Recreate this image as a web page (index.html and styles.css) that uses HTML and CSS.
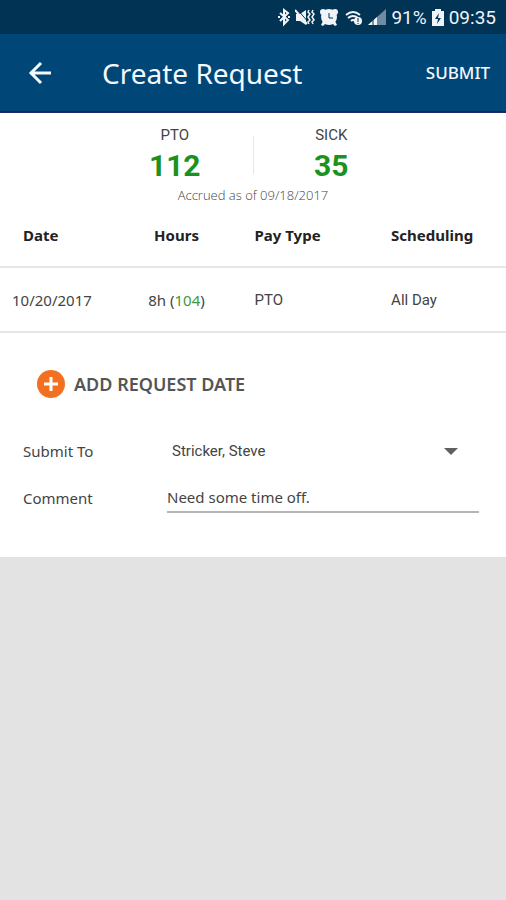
FILE: index.html
```html
<!DOCTYPE html>
<html lang="en">
<head>
<meta charset="utf-8">
<meta name="viewport" content="width=device-width, initial-scale=1">
<title>Create Request</title>
<link rel="stylesheet" href="styles.css">
</head>
<body>
<div class="status">
  <svg width="12" height="20" viewBox="0 0 12 20" fill="none" stroke="currentColor" stroke-width="2" aria-hidden="true"><path d="M2 5l8 7-4 4V2l4 3-8 8"/><path d="M0 9h2M10 9h2"/></svg>
  <svg width="20" height="20" viewBox="0 0 20 20" aria-hidden="true"><path fill="currentColor" d="M1 6h4l6-4v15l-6-4H1z"/><path class="cut" d="M2 1l12 14"/><path fill="none" stroke="currentColor" stroke-width="2" d="M0 2l12 14"/><path fill="none" stroke="currentColor" stroke-width="1.500" d="M14 2l-1 2 2 2-2 3 2 3-2 2 1 2M18 2l-1 2 2 2-2 3 2 3-2 2 1 2"/></svg>
  <svg width="18" height="20" viewBox="0 0 18 20" aria-hidden="true"><g fill="currentColor"><circle cx="9" cy="9" r="8"/><circle cx="3" cy="4" r="3"/><circle cx="15" cy="4" r="3"/><path d="M3 13l3 2-3 3-2-1zM15 13l-3 2 3 3 2-1z"/></g><path class="cut" d="M9 5v5h4"/></svg>
  <svg class="wifi" width="18" height="20" viewBox="0 0 18 20" fill="none" stroke="currentColor" stroke-width="2" aria-hidden="true"><path d="M1 7q7-6 14 0M3 10q5-4 10 0M6 13q2-2 4 0"/><circle cx="13" cy="13" r="4" fill="currentColor" stroke="none"/><path class="cut" d="M13 10v4M13 15v1"/></svg>
  <svg width="18" height="20" viewBox="0 0 18 20" aria-hidden="true"><path fill="#6f8ca3" d="M18 1v16H0z"/><path fill="currentColor" d="M9 9v8H0z"/><path class="cut" d="M5 11v6"/></svg>
  <span>91%</span>
  <svg width="12" height="20" viewBox="0 0 12 20" aria-hidden="true"><path fill="currentColor" d="M0 3h3V1h6v2h3v15H0z"/><path class="bolt" d="M7 5l-4 6h3l-1 5 4-6H6z"/></svg>
  <span>09:35</span>
</div>
<header class="appbar">
  <button class="back" type="button" aria-label="Back"><svg width="24" height="24" viewBox="0 0 24 24" fill="none" stroke="currentColor" stroke-width="3" aria-hidden="true"><path d="M23 12H2M13 2L3 12l10 10"/></svg></button>
  <h1>Create Request</h1>
  <button class="submit" type="button">SUBMIT</button>
</header>
<main class="card">
  <section class="summary">
    <div class="balances">
      <div class="balance"><span>PTO</span><strong>112</strong></div>
      <div class="divider"></div>
      <div class="balance"><span>SICK</span><strong>35</strong></div>
    </div>
    <p>Accrued as of 09/18/2017</p>
  </section>
  <table>
    <thead><tr><th class="date">Date</th><th class="hours">Hours</th><th class="type">Pay Type</th><th>Scheduling</th></tr></thead>
    <tbody><tr><td class="date">10/20/2017</td><td class="hours">8h (<span class="left">104</span>)</td><td class="type">PTO</td><td class="shift">All Day</td></tr></tbody>
  </table>
  <button class="add" type="button"><svg width="28" height="28" viewBox="0 0 28 28" aria-hidden="true"><circle cx="14" cy="14" r="14" fill="#f37021"/><path stroke="#fff" stroke-width="3" d="M7 14h14M14 7v14"/></svg>ADD REQUEST DATE</button>
  <form class="fields">
    <label for="approver">Submit To</label>
    <div class="picker">
      <select id="approver"><option>Stricker, Steve</option></select>
      <svg width="14" height="7" viewBox="0 0 14 7" aria-hidden="true"><path fill="#606060" d="M0 0h14L7 7z"/></svg>
    </div>
    <label for="comment">Comment</label>
    <input id="comment" type="text" value="Need some time off.">
  </form>
</main>
</body>
</html>
```
FILE: styles.css
```css
* { box-sizing: border-box; }
body {
  margin: 0;
  background: #e3e3e3;
  color: #444;
  font: 15px/20px "Noto Sans", sans-serif;
}
button, input, select {
  padding: 0;
  border: 0;
  background: none;
  color: inherit;
  font: inherit;
}
.status {
  display: flex;
  justify-content: flex-end;
  align-items: center;
  gap: 5px;
  height: 34px;
  padding: 2px 10px 0 0;
  background: #003354;
  color: #f0f4f8;
  font: 19px/24px Roboto, sans-serif;
}
.cut { fill: none; stroke: #003354; stroke-width: 1; }
.bolt { fill: #003354; }
.wifi { margin-left: 2px; }
.appbar {
  display: flex;
  align-items: center;
  height: 79px;
  padding: 0 16px 0 28px;
  border-bottom: 2px solid #10206a;
  background: #004677;
  color: #f4f8ff;
}
.back { display: flex; width: 74px; }
h1 { flex: 1; margin: 0; font-size: 28px; line-height: 36px; font-weight: 400; }
.submit { font-size: 17px; font-weight: 500; }
.card {
  padding-bottom: 44px;
  background: #fff;
  box-shadow: 0 1px 3px #666;
}
.summary { padding-top: 12px; text-align: center; }
.balances { display: grid; grid-template-columns: 1fr 1px 1fr; width: 312px; margin: 0 auto; }
.balance { display: grid; font-family: Roboto, sans-serif; }
.balance strong { color: #1b921b; font: 700 30px/42px Roboto, sans-serif; }
.divider { height: 38px; margin-top: 11px; background: #e6e6e6; }
.summary p { margin: 0; font: 300 13px/16px "Open Sans", sans-serif; color: #444; }
table { width: 100%; border-collapse: collapse; table-layout: fixed; }
th, td { height: 65px; padding: 0; border-bottom: 2px solid #e6e6e6; text-align: left; }
thead th { height: 64px; }
th { color: #222; font-weight: 700; }
th.date { padding-left: 23px; }
td.date { padding-left: 12px; }
.date { width: 25%; }
.hours { width: 128px; padding-right: 28px; text-align: center; }
.type { width: 27%; }
td.type, .shift { font-family: Roboto, sans-serif; }
.left { color: #3f9a3f; }
.add {
  display: flex;
  align-items: center;
  gap: 9px;
  margin: 37px 0 0 37px;
  color: #555;
  font-size: 18px;
  font-weight: 600;
}
.fields {
  display: grid;
  grid-template-columns: 144px 1fr;
  row-gap: 16px;
  align-items: center;
  padding: 37px 27px 0 23px;
}
.picker { display: grid; align-items: center; font-family: Roboto, sans-serif; }
.picker > * { grid-area: 1 / 1; }
.picker select { appearance: none; height: 32px; padding-left: 5px; }
.picker svg { justify-self: end; margin-right: 21px; pointer-events: none; }
#comment { width: 100%; height: 30px; border-bottom: 2px solid #b5b5b5; }
```
